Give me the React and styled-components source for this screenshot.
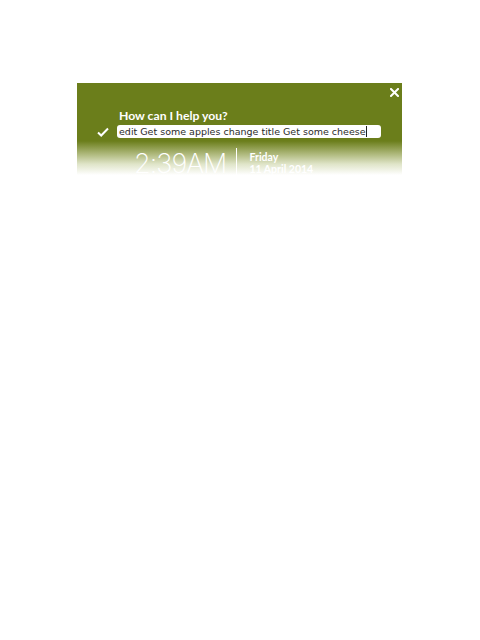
import React from "react";
import styled, { createGlobalStyle } from "styled-components";

const Global = createGlobalStyle`
  html, body {
    margin: 0;
    padding: 0;
    background: #fff;
  }
  body {
    font-family: "DejaVu Sans", "Liberation Sans", sans-serif;
  }
`;

const Page = styled.div`
  padding: 83px 0 0 77px;
`;

const Panel = styled.div`
  width: 325px;
  height: 104px;
  box-sizing: border-box;
  background: linear-gradient(
    to bottom,
    #6b7e1b 0px,
    #6b7e1b 58px,
    #a9b474 70px,
    #dfe4c8 81px,
    #ffffff 92px
  );
  display: flex;
  flex-direction: column;
  color: #fff;
`;

const TopBar = styled.div`
  display: flex;
  justify-content: flex-end;
  padding: 3px 2px 0 0;
  height: 12px;
`;

const Close = styled.button`
  border: none;
  background: none;
  padding: 0;
  width: 12px;
  height: 12px;
  cursor: pointer;
  display: flex;
  align-items: center;
  justify-content: center;
`;

const Title = styled.div`
  margin: 11px 0 0 42px;
  font-family: "Lato", "DejaVu Sans", sans-serif;
  font-size: 12.2px;
  font-weight: bold;
  line-height: 14px;
`;

const InputRow = styled.div`
  display: flex;
  align-items: center;
  margin-top: 2px;
  padding-left: 20px;
  gap: 8px;
`;

const Check = styled.svg`
  width: 12px;
  height: 10px;
  flex: none;
`;

const Field = styled.div`
  width: 264px;
  height: 13px;
  box-sizing: border-box;
  background: #fff;
  border-radius: 3px;
  color: #2b2b2b;
  font-size: 9.5px;
  line-height: 13px;
  padding-left: 2px;
  white-space: nowrap;
  overflow: hidden;
  display: flex;
  align-items: center;
`;

const Caret = styled.span`
  display: inline-block;
  width: 1px;
  height: 11px;
  background: #222;
`;

const Clock = styled.div`
  display: flex;
  align-items: flex-start;
  margin: 10px 0 0 57px;
`;

const Time = styled.div`
  font-family: "Inter", "DejaVu Sans", sans-serif;
  font-weight: 200;
  font-size: 27px;
  line-height: 30px;
  letter-spacing: -0.9px;
  margin-top: 1px;
`;

const Divider = styled.div`
  width: 1px;
  height: 34px;
  background: #fff;
  margin: 0 12px 0 10px;
`;

const DateBlock = styled.div`
  display: flex;
  flex-direction: column;
  font-family: "Lato", "DejaVu Sans", sans-serif;
  font-size: 10.5px;
  font-weight: bold;
  line-height: 12px;
  padding-top: 3px;
`;

export default function App() {
  return (
    <>
      <Global />
      <Page>
        <Panel>
          <TopBar>
            <Close aria-label="close">
              <svg width="9" height="9" viewBox="0 0 9 9">
                <path
                  d="M1 1L8 8M8 1L1 8"
                  stroke="#fff"
                  strokeWidth="2"
                  strokeLinecap="square"
                />
              </svg>
            </Close>
          </TopBar>
          <Title>How can I help you?</Title>
          <InputRow>
            <Check viewBox="0 0 12 10">
              <path
                d="M1 5.5L4.2 8.5L11 1.5"
                fill="none"
                stroke="#fff"
                strokeWidth="2"
              />
            </Check>
            <Field>
              edit Get some apples change title Get some cheese
              <Caret />
            </Field>
          </InputRow>
          <Clock>
            <Time>2:39AM</Time>
            <Divider />
            <DateBlock>
              <span>Friday</span>
              <span>11 April 2014</span>
            </DateBlock>
          </Clock>
        </Panel>
      </Page>
    </>
  );
}
